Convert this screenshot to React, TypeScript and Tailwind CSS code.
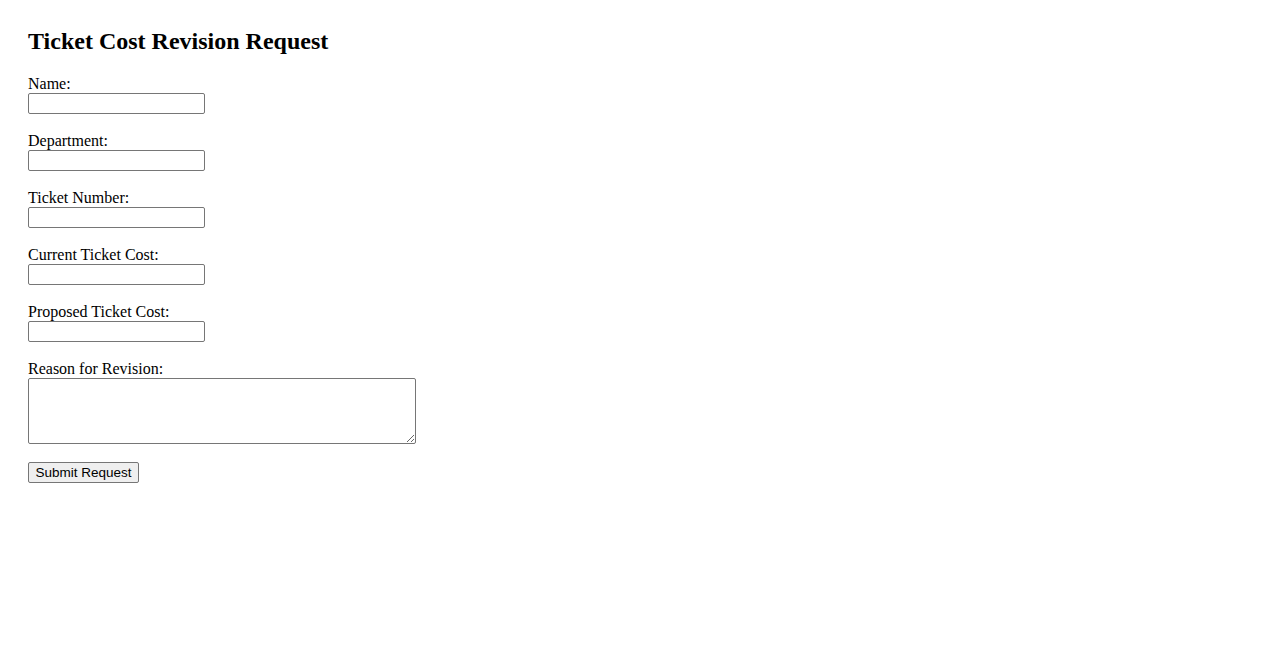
import { useState } from "react";

const fields = [
  { id: "name", label: "Name:" },
  { id: "department", label: "Department:" },
  { id: "ticketNumber", label: "Ticket Number:" },
  { id: "currentCost", label: "Current Ticket Cost:" },
  { id: "proposedCost", label: "Proposed Ticket Cost:" },
];

export default function App() {
  const [values, setValues] = useState<Record<string, string>>({});
  const [reason, setReason] = useState<string>("");

  return (
    <div className="min-h-screen bg-white text-black font-['Liberation_Serif','Times_New_Roman',serif] px-[28px] pt-[27px]">
      <h2 className="text-[24px] leading-[28px] font-bold mb-[19px]">Ticket Cost Revision Request</h2>
      <form className="flex flex-col items-start" onSubmit={(e) => e.preventDefault()}>
        {fields.map((f) => (
          <div key={f.id} className="flex flex-col items-start mb-[17px]">
            <label htmlFor={f.id} className="block text-[16px] leading-[18px] pt-[1px]">
              {f.label}
            </label>
            <input
              id={f.id}
              type="text"
              value={values[f.id] ?? ""}
              onChange={(e) => setValues({ ...values, [f.id]: e.target.value })}
              className="w-[177px] h-[21px] px-[2px] border border-[#767676] rounded-[2px] bg-white text-[13.33px] font-['Liberation_Sans',Arial,sans-serif]"
            />
          </div>
        ))}
        <div className="flex flex-col items-start">
          <label htmlFor="reason" className="block text-[16px] leading-[18px] pt-[1px]">
            Reason for Revision:
          </label>
          <textarea
            id="reason"
            value={reason}
            onChange={(e) => setReason(e.target.value)}
            className="w-[388px] h-[66px] p-[2px] border border-[#767676] rounded-[2px] bg-white text-[13.33px] font-['Liberation_Mono',monospace]"
          />
        </div>
        <button
          type="submit"
          className="mt-[18px] h-[21px] w-[111px] px-[6px] bg-[#efefef] border border-[#767676] rounded-[2px] text-[13.5px] leading-[17px] text-black font-['Liberation_Sans',Arial,sans-serif]"
        >
          Submit Request
        </button>
      </form>
    </div>
  );
}
